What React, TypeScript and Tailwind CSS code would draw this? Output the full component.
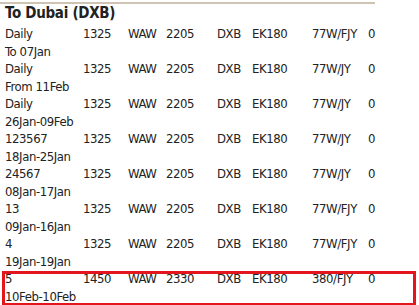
import React from "react";

type Row = { days: string; dep: string; from: string; arr: string; to: string; flt: string; eq: string; stops: string; range: string };

const rows: Row[] = [
  { days: "Daily", dep: "1325", from: "WAW", arr: "2205", to: "DXB", flt: "EK180", eq: "77W/FJY", stops: "0", range: "To 07Jan" },
  { days: "Daily", dep: "1325", from: "WAW", arr: "2205", to: "DXB", flt: "EK180", eq: "77W/JY", stops: "0", range: "From 11Feb" },
  { days: "Daily", dep: "1325", from: "WAW", arr: "2205", to: "DXB", flt: "EK180", eq: "77W/JY", stops: "0", range: "26Jan-09Feb" },
  { days: "123567", dep: "1325", from: "WAW", arr: "2205", to: "DXB", flt: "EK180", eq: "77W/JY", stops: "0", range: "18Jan-25Jan" },
  { days: "24567", dep: "1325", from: "WAW", arr: "2205", to: "DXB", flt: "EK180", eq: "77W/JY", stops: "0", range: "08Jan-17Jan" },
  { days: "13", dep: "1325", from: "WAW", arr: "2205", to: "DXB", flt: "EK180", eq: "77W/FJY", stops: "0", range: "09Jan-16Jan" },
  { days: "4", dep: "1325", from: "WAW", arr: "2205", to: "DXB", flt: "EK180", eq: "77W/FJY", stops: "0", range: "19Jan-19Jan" },
  { days: "5", dep: "1450", from: "WAW", arr: "2330", to: "DXB", flt: "EK180", eq: "380/FJY", stops: "0", range: "10Feb-10Feb" },
];

export default function App() {
  return (
    <div
      className="w-[419px] h-[305px] bg-white overflow-hidden relative text-[#222]"
      style={{ fontFamily: '"DejaVu Sans Condensed", "Liberation Sans", sans-serif' }}
    >
      <div className="w-[375px] h-[2px] bg-[#cfc3b3] mt-[2px]" />
      <div className="pl-[5px] text-[15px] font-bold leading-[19px] h-[21px] tracking-[-0.3px]">To Dubai (DXB)</div>
      <div className="flex flex-col">
        {rows.map((r, i) => (
          <div key={i} className="relative pl-[5px] text-[13px] leading-[17.5px] tracking-[-0.4px]">
            <div className="grid grid-cols-[78px_45px_38px_51px_35px_60px_56px_auto]">
              <span>{r.days}</span>
              <span>{r.dep}</span>
              <span>{r.from}</span>
              <span>{r.arr}</span>
              <span>{r.to}</span>
              <span>{r.flt}</span>
              <span>{r.eq}</span>
              <span>{r.stops}</span>
            </div>
            <div>{r.range}</div>
            {i === rows.length - 1 && (
              <div className="absolute left-[2px] top-[1px] w-[414px] h-[35px] border-[3px] border-[#e3161e]" />
            )}
          </div>
        ))}
      </div>
    </div>
  );
}
